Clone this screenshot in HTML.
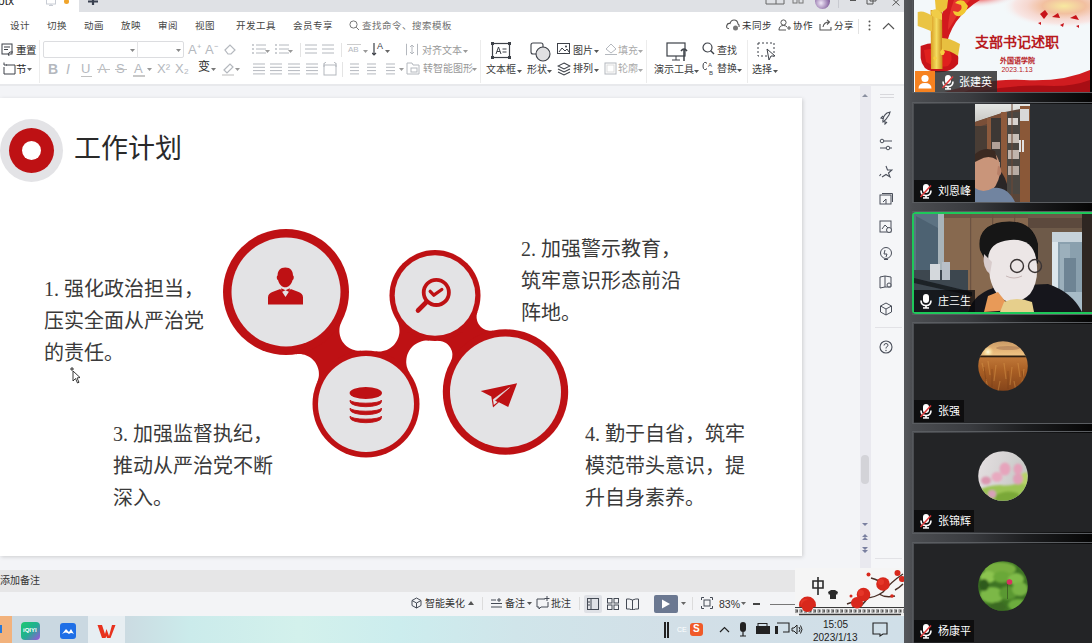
<!DOCTYPE html><html lang="zh-CN"><head><meta charset="utf-8"><style>
*{box-sizing:border-box}
body{margin:0;width:1092px;height:643px;overflow:hidden;position:relative;background:#f3f4f7;font-family:"Liberation Sans",sans-serif;color:#333}
.a{position:absolute}
.t{position:absolute;white-space:nowrap;font-size:10px;line-height:12px}
.song{font-family:"Liberation Serif",serif}
</style></head><body>
<div class="a" style="left:0;top:0;width:904px;height:12px;background:#dfe1e5"></div>
<div class="a" style="left:0;top:0;width:79px;height:12px;background:#fff"></div>
<div class="t" style="left:-2px;top:-6px;font-size:12px;line-height:14px;color:#2a2a2a;">otx</div>
<svg class="a" style="left:46px;top:0px" width="10" height="6" viewBox="0 0 10 6"><rect x="0.5" y="-2" width="9" height="6" fill="none" stroke="#c8ccd4"/><path d="M5 4 V6 M3 5.5 H7" stroke="#c8ccd4"/></svg>
<div class="a" style="left:64px;top:-1px;width:5px;height:5px;border-radius:50%;background:#f0a42a"></div>
<svg class="a" style="left:87px;top:0px" width="12" height="5" viewBox="0 0 12 5"><path d="M1 1.5 H11 M6 -4 V5" stroke="#3a4150" stroke-width="2.2"/></svg>
<svg class="a" style="left:765px;top:0px" width="20" height="5" viewBox="0 0 20 5"><path d="M1 -2 V4 H19 V-2 M11 -2 V4" stroke="#666" fill="none"/></svg>
<svg class="a" style="left:792px;top:0px" width="12" height="5" viewBox="0 0 12 5"><rect x="1" y="-2" width="4" height="5" fill="none" stroke="#777"/><rect x="7" y="-2" width="4" height="5" fill="none" stroke="#777"/></svg>
<div class="a" style="left:815px;top:-6px;width:15px;height:15px;border-radius:50%;background:radial-gradient(circle at 40% 60%,#f0e8f8,#9070a8 60%,#604878)"></div>
<div class="a" style="left:838px;top:0;width:1px;height:8px;background:#c8cad0"></div>
<div class="a" style="left:850px;top:0;width:6px;height:1px;background:#555"></div>
<svg class="a" style="left:866px;top:0px" width="11" height="5" viewBox="0 0 11 5"><path d="M1 -2 V4 H7 V-2 M4 -2 V1 H10 V-2" stroke="#555" fill="none"/></svg>
<svg class="a" style="left:892px;top:0px" width="8" height="6" viewBox="0 0 8 6"><path d="M0.5 -1 L7.5 5.5 M7.5 -1 L0.5 5.5" stroke="#555" fill="none"/></svg>
<div class="a" style="left:0;top:12px;width:904px;height:73px;background:#fff"></div>
<div class="t" style="left:10px;top:20px;font-size:9.5px;line-height:11.5px;color:#444;">设计</div>
<div class="t" style="left:47px;top:20px;font-size:9.5px;line-height:11.5px;color:#444;">切换</div>
<div class="t" style="left:84px;top:20px;font-size:9.5px;line-height:11.5px;color:#444;">动画</div>
<div class="t" style="left:121px;top:20px;font-size:9.5px;line-height:11.5px;color:#444;">放映</div>
<div class="t" style="left:158px;top:20px;font-size:9.5px;line-height:11.5px;color:#444;">审阅</div>
<div class="t" style="left:195px;top:20px;font-size:9.5px;line-height:11.5px;color:#444;">视图</div>
<div class="t" style="left:236px;top:20px;font-size:9.5px;line-height:11.5px;color:#444;">开发工具</div>
<div class="t" style="left:293px;top:20px;font-size:9.5px;line-height:11.5px;color:#444;">会员专享</div>
<svg class="a" style="left:349px;top:20px" width="11" height="11" viewBox="0 0 11 11"><circle cx="4.5" cy="4.5" r="3.6" fill="none" stroke="#777" stroke-width="1"/><path d="M7.2 7.2 L10 10" stroke="#777"/></svg>
<div class="t" style="left:362px;top:20px;font-size:9.5px;line-height:11.5px;color:#707070;">查找命令、搜索模板</div>
<svg class="a" style="left:726px;top:19px" width="14" height="12" viewBox="0 0 14 12"><path d="M3 9.5 Q0 9.5 0.8 6.5 Q1.5 4 4 4.5 Q5 1 8 1 Q11.5 1 12 5 Q13.5 5.5 13 8" fill="none" stroke="#555" stroke-width="1.1"/><circle cx="9.5" cy="9" r="2.5" fill="#777"/></svg>
<div class="t" style="left:742px;top:20px;font-size:9.5px;line-height:11.5px;color:#333;">未同步</div>
<svg class="a" style="left:778px;top:19px" width="13" height="12" viewBox="0 0 13 12"><circle cx="5.5" cy="3.5" r="2.6" fill="none" stroke="#555"/><path d="M1 11 Q1 6.5 5.5 6.5 Q8 6.5 9 8 M0.8 11 H8" fill="none" stroke="#555"/><path d="M9 9 H13 M11 7 V11" stroke="#555"/></svg>
<div class="t" style="left:793px;top:20px;font-size:9.5px;line-height:11.5px;color:#333;">协作</div>
<svg class="a" style="left:819px;top:19px" width="13" height="12" viewBox="0 0 13 12"><path d="M1 5 V11 H12 V8 M4 8 Q5 3 10 3 M8 0.8 L10.5 3 L8 5.5" fill="none" stroke="#555" stroke-width="1.1"/></svg>
<div class="t" style="left:834px;top:20px;font-size:9.5px;line-height:11.5px;color:#333;">分享</div>
<div class="a" style="left:858px;top:19px;width:1px;height:15px;background:#e2e2e2"></div>
<svg class="a" style="left:868px;top:20px" width="3" height="11" viewBox="0 0 3 11"><circle cx="1.5" cy="1.5" r="1" fill="#555"/><circle cx="1.5" cy="5.5" r="1" fill="#555"/><circle cx="1.5" cy="9.5" r="1" fill="#555"/></svg>
<svg class="a" style="left:882px;top:22px" width="13" height="8" viewBox="0 0 13 8"><path d="M1 7 L6.5 1.5 L12 7" fill="none" stroke="#555" stroke-width="1.2"/></svg>
<svg class="a" style="left:1px;top:43px" width="14" height="14" viewBox="0 0 14 14"><rect x="1" y="1" width="10" height="10" fill="none" stroke="#3d4148"/><path d="M3 4 H9 M3 6.5 H7" stroke="#3d4148"/><path d="M8 13 Q6 10 9 9 L12 9" fill="none" stroke="#3d4148"/></svg>
<div class="t" style="left:16px;top:44px;font-size:10.5px;line-height:12.5px;color:#2a2a2a;">重置</div>
<svg class="a" style="left:3px;top:62px" width="13" height="13" viewBox="0 0 13 13"><path d="M1 3 H4 M1 0.5 V3 M3 3 H12 V12 H1 V5" fill="none" stroke="#3d4148"/></svg>
<div class="t" style="left:16px;top:63px;font-size:10.5px;line-height:12.5px;color:#2a2a2a;">节</div>
<svg class="a" style="left:27px;top:68px" width="5" height="3" viewBox="0 0 5 3"><path d="M0 0 L5 0 L2.5 3Z" fill="#666"/></svg>
<div class="a" style="left:39px;top:40px;width:1px;height:43px;background:#ececec"></div>
<div class="a" style="left:43px;top:41px;width:141px;height:17px;border:1px solid #dcdde0;border-radius:2px"></div>
<div class="a" style="left:137px;top:41px;width:1px;height:17px;background:#e4e4e6"></div>
<svg class="a" style="left:130px;top:49px" width="5" height="3" viewBox="0 0 5 3"><path d="M0 0 L5 0 L2.5 3Z" fill="#888"/></svg>
<svg class="a" style="left:176px;top:49px" width="5" height="3" viewBox="0 0 5 3"><path d="M0 0 L5 0 L2.5 3Z" fill="#888"/></svg>
<div class="t" style="left:188px;top:42px;font-size:13px;line-height:15px;color:#b4b8be;">A⁺</div>
<div class="t" style="left:205px;top:42px;font-size:13px;line-height:15px;color:#b4b8be;">A⁻</div>
<svg class="a" style="left:224px;top:43px" width="13" height="12" viewBox="0 0 13 12"><path d="M1 7 L6 2 L11 7 L7 11 H4Z" fill="none" stroke="#b4b8be" stroke-width="1.2"/></svg>
<div class="t" style="left:48px;top:61px;font-size:14px;line-height:16px;color:#b4b8be;font-weight:bold">B</div>
<div class="t" style="left:66px;top:61px;font-size:14px;line-height:16px;color:#b4b8be;font-style:italic">I</div>
<div class="t" style="left:81px;top:61px;font-size:13px;line-height:15px;color:#b4b8be;">U</div>
<div class="a" style="left:81px;top:76px;width:11px;height:1px;background:#c0c0c0"></div>
<div class="t" style="left:98px;top:61px;font-size:13px;line-height:15px;color:#b4b8be;">A</div>
<div class="a" style="left:97px;top:69px;width:13px;height:1px;background:#c0c0c0"></div>
<div class="t" style="left:116px;top:61px;font-size:13px;line-height:15px;color:#b4b8be;">S</div>
<div class="a" style="left:115px;top:69px;width:12px;height:1px;background:#c0c0c0"></div>
<div class="t" style="left:134px;top:61px;font-size:13px;line-height:15px;color:#b4b8be;">A</div>
<div class="a" style="left:133px;top:75px;width:12px;height:2px;background:#c8c8c8"></div>
<svg class="a" style="left:147px;top:68px" width="5" height="3" viewBox="0 0 5 3"><path d="M0 0 L5 0 L2.5 3Z" fill="#999"/></svg>
<div class="t" style="left:157px;top:61px;font-size:13px;line-height:15px;color:#b4b8be;">X²</div>
<div class="t" style="left:175px;top:61px;font-size:13px;line-height:15px;color:#b4b8be;">X₂</div>
<div class="t" style="left:198px;top:60px;font-size:12px;line-height:14px;color:#2a2a2a;">变</div>
<svg class="a" style="left:211px;top:68px" width="5" height="3" viewBox="0 0 5 3"><path d="M0 0 L5 0 L2.5 3Z" fill="#777"/></svg>
<svg class="a" style="left:221px;top:61px" width="16" height="15" viewBox="0 0 16 15"><path d="M3 9 L9 3 L12 6 L6 12Z" fill="none" stroke="#b4b8be" stroke-width="1.2"/><rect x="1" y="13" width="12" height="2" fill="#ddd"/></svg>
<svg class="a" style="left:235px;top:68px" width="5" height="3" viewBox="0 0 5 3"><path d="M0 0 L5 0 L2.5 3Z" fill="#999"/></svg>
<svg class="a" style="left:252px;top:44px" width="16" height="14" viewBox="0 0 16 14"><circle cx="1" cy="1" r="0.9" fill="#b4b8be"/><path d="M4 1 H14" stroke="#b4b8be" stroke-width="1"/><circle cx="1" cy="5" r="0.9" fill="#b4b8be"/><path d="M4 5 H14" stroke="#b4b8be" stroke-width="1"/><circle cx="1" cy="9" r="0.9" fill="#b4b8be"/><path d="M4 9 H14" stroke="#b4b8be" stroke-width="1"/></svg>
<svg class="a" style="left:265px;top:50px" width="5" height="3" viewBox="0 0 5 3"><path d="M0 0 L5 0 L2.5 3Z" fill="#999"/></svg>
<svg class="a" style="left:275px;top:44px" width="16" height="14" viewBox="0 0 16 14"><circle cx="1" cy="1" r="0.9" fill="#b4b8be"/><path d="M4 1 H14" stroke="#b4b8be" stroke-width="1"/><circle cx="1" cy="5" r="0.9" fill="#b4b8be"/><path d="M4 5 H14" stroke="#b4b8be" stroke-width="1"/><circle cx="1" cy="9" r="0.9" fill="#b4b8be"/><path d="M4 9 H14" stroke="#b4b8be" stroke-width="1"/></svg>
<svg class="a" style="left:288px;top:50px" width="5" height="3" viewBox="0 0 5 3"><path d="M0 0 L5 0 L2.5 3Z" fill="#999"/></svg>
<div class="a" style="left:300px;top:43px;width:1px;height:14px;background:#e4e4e4"></div>
<svg class="a" style="left:305px;top:44px" width="18" height="14" viewBox="0 0 18 14"><path d="M0 1 H12" stroke="#b4b8be" stroke-width="1"/><path d="M0 5 H12" stroke="#b4b8be" stroke-width="1"/><path d="M0 9 H12" stroke="#b4b8be" stroke-width="1"/></svg>
<svg class="a" style="left:322px;top:44px" width="18" height="14" viewBox="0 0 18 14"><path d="M0 1 H12" stroke="#b4b8be" stroke-width="1"/><path d="M0 5 H12" stroke="#b4b8be" stroke-width="1"/><path d="M0 9 H12" stroke="#b4b8be" stroke-width="1"/></svg>
<div class="a" style="left:341px;top:43px;width:1px;height:14px;background:#e4e4e4"></div>
<div class="t" style="left:348px;top:45px;font-size:8px;line-height:10px;color:#b4b8be;">AB</div>
<div class="a" style="left:347px;top:44px;width:14px;height:1px;background:#ccc"></div>
<svg class="a" style="left:363px;top:50px" width="5" height="3" viewBox="0 0 5 3"><path d="M0 0 L5 0 L2.5 3Z" fill="#999"/></svg>
<svg class="a" style="left:372px;top:42px" width="12" height="14" viewBox="0 0 12 14"><path d="M2 1 V13 M0 11 L2 13 L4 11" stroke="#3d4148" fill="none" stroke-width="1.2"/></svg>
<div class="t" style="left:377px;top:41px;font-size:9px;line-height:11px;color:#3d4148;">A</div>
<svg class="a" style="left:385px;top:50px" width="5" height="3" viewBox="0 0 5 3"><path d="M0 0 L5 0 L2.5 3Z" fill="#666"/></svg>
<svg class="a" style="left:406px;top:43px" width="12" height="13" viewBox="0 0 12 13"><path d="M1 1 H0.5 V12 H1 M11 1 H11.5 V12 H11 M6 2 V11 M4 4 L6 2 L8 4 M4 9 L6 11 L8 9" stroke="#b4b8be" fill="none"/></svg>
<div class="t" style="left:422px;top:45px;font-size:10px;line-height:12px;color:#999;">对齐文本</div>
<svg class="a" style="left:463px;top:50px" width="5" height="3" viewBox="0 0 5 3"><path d="M0 0 L5 0 L2.5 3Z" fill="#999"/></svg>
<svg class="a" style="left:253px;top:63px" width="18" height="15.2" viewBox="0 0 18 15.2"><path d="M0 1.0 H12" stroke="#b4b8be" stroke-width="1"/><path d="M0 4.3 H12" stroke="#b4b8be" stroke-width="1"/><path d="M0 7.6 H12" stroke="#b4b8be" stroke-width="1"/><path d="M0 10.899999999999999 H12" stroke="#b4b8be" stroke-width="1"/></svg>
<svg class="a" style="left:270px;top:63px" width="18" height="15.2" viewBox="0 0 18 15.2"><path d="M0 1.0 H12" stroke="#b4b8be" stroke-width="1"/><path d="M0 4.3 H12" stroke="#b4b8be" stroke-width="1"/><path d="M0 7.6 H12" stroke="#b4b8be" stroke-width="1"/><path d="M0 10.899999999999999 H12" stroke="#b4b8be" stroke-width="1"/></svg>
<svg class="a" style="left:288px;top:63px" width="18" height="15.2" viewBox="0 0 18 15.2"><path d="M0 1.0 H12" stroke="#b4b8be" stroke-width="1"/><path d="M0 4.3 H12" stroke="#b4b8be" stroke-width="1"/><path d="M0 7.6 H12" stroke="#b4b8be" stroke-width="1"/><path d="M0 10.899999999999999 H12" stroke="#b4b8be" stroke-width="1"/></svg>
<svg class="a" style="left:306px;top:63px" width="18" height="15.2" viewBox="0 0 18 15.2"><path d="M0 1.0 H12" stroke="#b4b8be" stroke-width="1"/><path d="M0 4.3 H12" stroke="#b4b8be" stroke-width="1"/><path d="M0 7.6 H12" stroke="#b4b8be" stroke-width="1"/><path d="M0 10.899999999999999 H12" stroke="#b4b8be" stroke-width="1"/></svg>
<svg class="a" style="left:323px;top:62px" width="14" height="14" viewBox="0 0 14 14"><rect x="1" y="3" width="12" height="10" fill="none" stroke="#b4b8be"/><path d="M1 1 V5 M13 1 V5 M3 0 L1 1.5 M11 0 L13 1.5" stroke="#b4b8be"/></svg>
<div class="a" style="left:342px;top:62px;width:1px;height:15px;background:#e4e4e4"></div>
<svg class="a" style="left:350px;top:63px" width="15" height="15.2" viewBox="0 0 15 15.2"><path d="M0 1.0 H9" stroke="#b4b8be" stroke-width="1"/><path d="M0 4.3 H9" stroke="#b4b8be" stroke-width="1"/><path d="M0 7.6 H9" stroke="#b4b8be" stroke-width="1"/><path d="M0 10.899999999999999 H9" stroke="#b4b8be" stroke-width="1"/></svg>
<svg class="a" style="left:367px;top:63px" width="15" height="15.2" viewBox="0 0 15 15.2"><path d="M0 1.0 H9" stroke="#b4b8be" stroke-width="1"/><path d="M0 4.3 H9" stroke="#b4b8be" stroke-width="1"/><path d="M0 7.6 H9" stroke="#b4b8be" stroke-width="1"/><path d="M0 10.899999999999999 H9" stroke="#b4b8be" stroke-width="1"/></svg>
<svg class="a" style="left:386px;top:63px" width="15" height="15.2" viewBox="0 0 15 15.2"><path d="M0 1.0 H9" stroke="#b4b8be" stroke-width="1"/><path d="M0 4.3 H9" stroke="#b4b8be" stroke-width="1"/><path d="M0 7.6 H9" stroke="#b4b8be" stroke-width="1"/><path d="M0 10.899999999999999 H9" stroke="#b4b8be" stroke-width="1"/></svg>
<svg class="a" style="left:399px;top:68px" width="5" height="3" viewBox="0 0 5 3"><path d="M0 0 L5 0 L2.5 3Z" fill="#999"/></svg>
<svg class="a" style="left:406px;top:62px" width="14" height="13" viewBox="0 0 14 13"><path d="M1 1 H6 L7 3 H13 V12 H1Z" fill="none" stroke="#b4b8be"/><rect x="5" y="6" width="6" height="4" fill="none" stroke="#b4b8be"/></svg>
<div class="t" style="left:423px;top:63px;font-size:10px;line-height:12px;color:#999;">转智能图形</div>
<svg class="a" style="left:472px;top:68px" width="5" height="3" viewBox="0 0 5 3"><path d="M0 0 L5 0 L2.5 3Z" fill="#999"/></svg>
<div class="a" style="left:480px;top:40px;width:1px;height:43px;background:#ececec"></div>
<svg class="a" style="left:491px;top:42px" width="20" height="18" viewBox="0 0 20 18"><rect x="1.5" y="1.5" width="17" height="14" fill="none" stroke="#3d4148" stroke-width="1.2"/><path d="M5 12 L7.5 5 L10 12 M6 9.5 H9 M11.5 7 H15.5 M11.5 10 H15.5" stroke="#3d4148" fill="none"/><rect x="0" y="0" width="3" height="3" fill="#3d4148"/><rect x="17" y="0" width="3" height="3" fill="#3d4148"/><rect x="0" y="14" width="3" height="3" fill="#3d4148"/><rect x="17" y="14" width="3" height="3" fill="#3d4148"/></svg>
<div class="t" style="left:486px;top:64px;font-size:10px;line-height:12px;color:#3a3a3a;">文本框</div>
<svg class="a" style="left:517px;top:70px" width="5" height="3" viewBox="0 0 5 3"><path d="M0 0 L5 0 L2.5 3Z" fill="#555"/></svg>
<svg class="a" style="left:530px;top:42px" width="22" height="20" viewBox="0 0 22 20"><rect x="1" y="1" width="12" height="11" rx="2" fill="none" stroke="#3d4148" stroke-width="1.1"/><circle cx="13" cy="12" r="7" fill="#e0e0e2" stroke="#3d4148" stroke-width="1.1"/></svg>
<div class="t" style="left:527px;top:64px;font-size:10px;line-height:12px;color:#3a3a3a;">形状</div>
<svg class="a" style="left:547px;top:70px" width="5" height="3" viewBox="0 0 5 3"><path d="M0 0 L5 0 L2.5 3Z" fill="#555"/></svg>
<svg class="a" style="left:557px;top:43px" width="14" height="12" viewBox="0 0 14 12"><rect x="0.5" y="0.5" width="12" height="10" fill="none" stroke="#3d4148"/><path d="M2 9 L5 5 L8 8 L10 6 L12 9" stroke="#3d4148" fill="none"/><circle cx="9" cy="3.5" r="1" fill="#3d4148"/></svg>
<div class="t" style="left:573px;top:45px;font-size:10px;line-height:12px;color:#3a3a3a;">图片</div>
<svg class="a" style="left:594px;top:50px" width="5" height="3" viewBox="0 0 5 3"><path d="M0 0 L5 0 L2.5 3Z" fill="#555"/></svg>
<svg class="a" style="left:604px;top:43px" width="14" height="12" viewBox="0 0 14 12"><path d="M2 6 L7 1 L12 6 L7 10Z M1 11.5 H13" stroke="#b4b8be" fill="none"/></svg>
<div class="t" style="left:618px;top:45px;font-size:10px;line-height:12px;color:#aaa;">填充</div>
<svg class="a" style="left:638px;top:50px" width="5" height="3" viewBox="0 0 5 3"><path d="M0 0 L5 0 L2.5 3Z" fill="#aaa"/></svg>
<svg class="a" style="left:557px;top:62px" width="14" height="14" viewBox="0 0 14 14"><path d="M7 1 L13 4 L7 7 L1 4Z M1 7 L7 10 L13 7 M1 10 L7 13 L13 10" stroke="#3d4148" fill="none" stroke-width="1.1"/></svg>
<div class="t" style="left:573px;top:63px;font-size:10px;line-height:12px;color:#3a3a3a;">排列</div>
<svg class="a" style="left:594px;top:69px" width="5" height="3" viewBox="0 0 5 3"><path d="M0 0 L5 0 L2.5 3Z" fill="#555"/></svg>
<svg class="a" style="left:604px;top:62px" width="13" height="13" viewBox="0 0 13 13"><rect x="1" y="1" width="11" height="11" fill="none" stroke="#b4b8be"/><rect x="3" y="3" width="7" height="7" fill="none" stroke="#ddd"/></svg>
<div class="t" style="left:618px;top:63px;font-size:10px;line-height:12px;color:#aaa;">轮廓</div>
<svg class="a" style="left:638px;top:69px" width="5" height="3" viewBox="0 0 5 3"><path d="M0 0 L5 0 L2.5 3Z" fill="#aaa"/></svg>
<div class="a" style="left:646px;top:40px;width:1px;height:43px;background:#ececec"></div>
<svg class="a" style="left:666px;top:42px" width="24" height="20" viewBox="0 0 24 20"><rect x="1" y="1" width="18" height="13" fill="none" stroke="#3d4148" stroke-width="1.2"/><path d="M10 14 V18 M6 18 H14" stroke="#3d4148" fill="none"/><path d="M18 8 L18 19 M15 9 Q18 5 21 9" stroke="#3d4148" fill="none" stroke-width="1.5"/></svg>
<div class="t" style="left:654px;top:64px;font-size:10px;line-height:12px;color:#3a3a3a;">演示工具</div>
<svg class="a" style="left:694px;top:70px" width="5" height="3" viewBox="0 0 5 3"><path d="M0 0 L5 0 L2.5 3Z" fill="#555"/></svg>
<svg class="a" style="left:702px;top:42px" width="13" height="13" viewBox="0 0 13 13"><circle cx="5.5" cy="5.5" r="4.5" fill="none" stroke="#3d4148" stroke-width="1.2"/><path d="M8.5 8.5 L12 12" stroke="#3d4148" stroke-width="1.4"/></svg>
<div class="t" style="left:717px;top:45px;font-size:10px;line-height:12px;color:#3a3a3a;">查找</div>
<svg class="a" style="left:702px;top:61px" width="14" height="15" viewBox="0 0 14 15"><path d="M5 2.5 Q4 1 2.5 1.5 Q1 2 1 5 Q1 8 2.5 8.5 Q4 9 5 7.5" stroke="#3d4148" fill="none"/><text x="6" y="6" font-size="6" font-family="Liberation Sans" fill="#3d4148">A</text><text x="7" y="14" font-size="6" font-family="Liberation Sans" fill="#3d4148">B</text></svg>
<div class="t" style="left:717px;top:63px;font-size:10px;line-height:12px;color:#3a3a3a;">替换</div>
<svg class="a" style="left:737px;top:69px" width="5" height="3" viewBox="0 0 5 3"><path d="M0 0 L5 0 L2.5 3Z" fill="#555"/></svg>
<div class="a" style="left:747px;top:40px;width:1px;height:43px;background:#ececec"></div>
<svg class="a" style="left:757px;top:42px" width="20" height="20" viewBox="0 0 20 20"><rect x="1" y="1" width="16" height="13" fill="none" stroke="#3d4148" stroke-dasharray="2 2"/><path d="M10 7 L18 14 L14 14 L12 18Z" fill="#fff" stroke="#3d4148"/></svg>
<div class="t" style="left:752px;top:64px;font-size:10px;line-height:12px;color:#3a3a3a;">选择</div>
<svg class="a" style="left:773px;top:70px" width="5" height="3" viewBox="0 0 5 3"><path d="M0 0 L5 0 L2.5 3Z" fill="#555"/></svg>
<div class="a" style="left:0;top:84px;width:904px;height:2px;background:#e8e9ec"></div>
<div class="a" style="left:0;top:86px;width:860px;height:484px;background:#f3f4f7"></div>
<div class="a" style="left:0;top:98px;width:802px;height:458px;background:#fff;box-shadow:1px 1px 4px rgba(0,0,0,.16)"></div>
<div class="a" style="left:0;top:0;width:802px;height:560px">
<svg style="position:absolute;left:0;top:0" width="802" height="560"><path d="M295.8 354.2 L297.6 354.0 L299.4 354.0 L301.1 354.1 L302.9 354.4 L304.6 354.8 L306.3 355.4 L308.0 356.2 L309.5 357.0 L311.0 358.1 L312.4 359.2 L313.6 360.5 L314.8 361.8 L315.8 363.3 L316.7 364.9 L317.4 366.5 L318.0 368.2 L318.5 369.9 L318.8 371.7 L318.9 373.5 L318.9 375.2 L318.7 377.0 L318.3 378.8 L317.8 380.5 L317.2 382.2 L361.2 350.7 L359.4 350.8 L357.6 350.7 L355.8 350.5 L354.1 350.1 L352.4 349.5 L350.7 348.8 L349.2 348.0 L347.7 347.0 L346.3 345.9 L345.0 344.7 L343.8 343.3 L342.7 341.9 L341.8 340.4 L341.0 338.7 L340.4 337.1 L339.9 335.3 L339.6 333.6 L339.4 331.8 L339.4 330.0 L339.5 328.2 L339.8 326.5 L340.3 324.7 L340.9 323.1 L341.7 321.5Z" fill="#be1114"/><path d="M410.0 373.5 L408.9 371.8 L408.0 370.0 L407.3 368.1 L406.7 366.2 L406.4 364.2 L406.2 362.2 L406.3 360.2 L406.5 358.2 L406.9 356.3 L407.5 354.3 L408.3 352.5 L409.2 350.7 L410.3 349.1 L411.6 347.5 L413.0 346.1 L414.6 344.8 L416.2 343.7 L418.0 342.7 L419.8 341.9 L421.7 341.3 L423.7 340.8 L425.7 340.6 L427.7 340.5 L429.7 340.7 L396.3 319.5 L397.3 321.2 L398.1 323.1 L398.7 325.0 L399.2 326.9 L399.4 328.9 L399.5 330.9 L399.4 332.9 L399.0 334.9 L398.5 336.9 L397.8 338.7 L397.0 340.6 L395.9 342.3 L394.7 343.9 L393.4 345.4 L391.9 346.7 L390.3 347.9 L388.6 349.0 L386.8 349.9 L384.9 350.6 L382.9 351.1 L381.0 351.4 L379.0 351.5 L377.0 351.5 L375.0 351.3Z" fill="#be1114"/><path d="M437.6 340.9 L438.8 340.9 L440.1 341.0 L441.3 341.2 L442.5 341.5 L443.7 341.9 L444.8 342.5 L445.9 343.1 L446.9 343.8 L447.8 344.6 L448.7 345.5 L449.5 346.4 L450.2 347.5 L450.8 348.5 L451.3 349.7 L451.8 350.8 L452.1 352.0 L452.3 353.3 L452.4 354.5 L452.3 355.8 L452.2 357.0 L452.0 358.2 L451.6 359.4 L451.2 360.6 L450.6 361.7 L493.3 330.5 L492.1 330.7 L490.8 330.8 L489.6 330.7 L488.3 330.6 L487.1 330.3 L485.9 330.0 L484.8 329.5 L483.7 329.0 L482.6 328.3 L481.6 327.5 L480.7 326.7 L479.9 325.8 L479.1 324.8 L478.4 323.8 L477.9 322.7 L477.4 321.5 L477.0 320.3 L476.8 319.1 L476.6 317.9 L476.6 316.6 L476.6 315.4 L476.8 314.2 L477.1 312.9 L477.5 311.8Z" fill="#be1114"/><circle cx="286" cy="292" r="63" fill="#be1114"/><circle cx="435" cy="295.5" r="45.5" fill="#be1114"/><circle cx="366" cy="404" r="53.5" fill="#be1114"/><circle cx="505.5" cy="392" r="62.7" fill="#be1114"/><circle cx="286" cy="292" r="54.5" fill="#e3e3e5"/><circle cx="435" cy="295.5" r="40.3" fill="#e3e3e5"/><circle cx="366" cy="404" r="48" fill="#e3e3e5"/><circle cx="505.5" cy="392" r="55.5" fill="#e3e3e5"/>
<g fill="#be1114">
 <path d="M285.3 267.6 C290.5 267.6 293 271 293 275.5 C294.2 276 294 279.5 292.6 280 C291.6 284.5 288.5 287.3 285.3 287.3 C282.1 287.3 279 284.5 278 280 C276.6 279.5 276.4 276 277.6 275.5 C277.6 271 280.1 267.6 285.3 267.6Z"/>
 <path d="M268 304.5 V297.5 Q268 293.5 273 291.8 L280.3 289 L285.5 297 L290.7 289 L298 291.8 Q303 293.5 303 297.5 V304.5Z"/>
 <path d="M281.2 288.3 L285.5 290.3 L289.8 288.3 L289.8 292.2 L285.5 290.3 L281.2 292.2Z"/>
</g>
<g fill="none" stroke="#be1114" stroke-linecap="round">
 <circle cx="436.3" cy="292.4" r="12.6" stroke-width="3.8"/>
 <path d="M426.5 302 L418 310.5" stroke-width="4.6"/>
 <path d="M430.2 291.3 L433.8 295.2 L441.8 289.5" stroke-width="3.3" stroke-linejoin="round"/>
</g>
<g fill="#be1114">
 <ellipse cx="365.8" cy="393" rx="16.2" ry="6"/>
 <path d="M350.2 400 A15.6 3.2 0 0 0 381.4 400 L381.4 401.8 A15.6 4.9 0 0 1 350.2 401.8Z" stroke="#be1114" stroke-width="0.9" stroke-linejoin="round"/>
 <path d="M350.2 408 A15.6 3.2 0 0 0 381.4 408 L381.4 409.8 A15.6 4.9 0 0 1 350.2 409.8Z" stroke="#be1114" stroke-width="0.9" stroke-linejoin="round"/>
 <path d="M350.2 416 A15.6 3.2 0 0 0 381.4 416 L381.4 417.8 A15.6 4.9 0 0 1 350.2 417.8Z" stroke="#be1114" stroke-width="0.9" stroke-linejoin="round"/>
</g>
<g>
 <path d="M480.7 391.1 L517.1 383.2 L508.2 407 L498.9 402.3 L493 407.6 L491.3 396.5Z" fill="#be1114"/>
 <path d="M509.5 387.6 L493.3 399.4 L494.3 401Z" fill="#e3e3e5" stroke="#e3e3e5" stroke-width="0.6"/>
 <path d="M493 399.5 L493.8 405 L497.6 402Z" fill="#e3e3e5"/>
</g>
</svg>
</div>
<div class="a" style="left:0;top:119px;width:63px;height:63px;border-radius:50%;background:#e3e3e6"></div>
<div class="a" style="left:9px;top:128px;width:45px;height:45px;border-radius:50%;background:#be1114"></div>
<div class="a" style="left:22px;top:141px;width:19px;height:19px;border-radius:50%;background:#fff"></div>
<div class="t song" style="left:74px;top:131px;font-size:27px;line-height:36px;color:#2a2a2a">工作计划</div>
<div class="t song" style="left:44px;top:273px;font-size:20px;line-height:32px;color:#3a3a3a;white-space:pre">1. 强化政治担当，
压实全面从严治党
的责任。</div>
<div class="t song" style="left:521px;top:233px;font-size:20px;line-height:32px;color:#3a3a3a;white-space:pre">2. 加强警示教育，
筑牢意识形态前沿
阵地。</div>
<div class="t song" style="left:113px;top:418px;font-size:20px;line-height:32px;color:#3a3a3a;white-space:pre">3. 加强监督执纪，
推动从严治党不断
深入。</div>
<div class="t song" style="left:585px;top:418px;font-size:20px;line-height:32px;color:#3a3a3a;white-space:pre">4. 勤于自省，筑牢
模范带头意识，提
升自身素养。</div>
<svg class="a" style="left:68px;top:366px" width="12" height="18" viewBox="0 0 12 18"><path d="M4 1 V5 M2 3 H6 M5 5 L5 15 L7.5 12.5 L9.5 17 L11 16.3 L9 12 L12 11.5Z" fill="#fff" stroke="#222" stroke-width="0.9"/></svg>
<div class="a" style="left:860px;top:86px;width:11px;height:484px;background:#e9e9ef"></div>
<svg class="a" style="left:861px;top:93px" width="8" height="5" viewBox="0 0 8 5"><path d="M1 4 L4 1 L7 4Z" fill="#8a8fa0"/></svg>
<div class="a" style="left:861px;top:455px;width:8px;height:29px;border-radius:4px;background:#d3d3d8"></div>
<svg class="a" style="left:861px;top:522px" width="8" height="5" viewBox="0 0 8 5"><path d="M1 1 L4 4 L7 1Z" fill="#7a80a0"/></svg>
<svg class="a" style="left:861px;top:533px" width="8" height="8" viewBox="0 0 8 8"><path d="M1 4 L4 1 L7 4Z M1 7 L4 4 L7 7Z" fill="#7a80a0"/></svg>
<svg class="a" style="left:861px;top:546px" width="8" height="8" viewBox="0 0 8 8"><path d="M1 1 L4 4 L7 1Z M1 4 L4 7 L7 4Z" fill="#7a80a0"/></svg>
<div class="a" style="left:871px;top:86px;width:33px;height:484px;background:#f5f6f8"></div>
<div class="a" style="left:880px;top:94px;width:14px;height:1px;background:#d8d8dc"></div><div class="a" style="left:880px;top:97px;width:14px;height:1px;background:#d8d8dc"></div>
<svg class="a" style="left:879px;top:111px" width="14" height="14" viewBox="0 0 14 14"><path d="M4 11 Q3 6 8 2 L11 1 L10 4 Q7 9 4 11Z M5 8 L2 7 L4 5 M6 10 L6 13 L8 11" fill="none" stroke="#4a4f5a" stroke-width="1.1"/></svg>
<svg class="a" style="left:879px;top:138px" width="14" height="14" viewBox="0 0 14 14"><circle cx="3" cy="3" r="1.8" fill="none" stroke="#4a4f5a"/><path d="M5 3 H13 M1 10 H13" stroke="#4a4f5a"/><circle cx="9" cy="10" r="1.8" fill="#f5f6f8" stroke="#4a4f5a"/></svg>
<svg class="a" style="left:879px;top:165px" width="14" height="14" viewBox="0 0 14 14"><path d="M7 1 L8.5 5 L13 5 L9.5 8 L11 12 L7 9.5 L3 12 M2 9 L0.5 11" fill="none" stroke="#4a4f5a" stroke-width="1.1"/></svg>
<svg class="a" style="left:879px;top:193px" width="14" height="14" viewBox="0 0 14 14"><rect x="1" y="2" width="11" height="9" fill="none" stroke="#4a4f5a"/><path d="M3 0.5 H13.5 V9" fill="none" stroke="#4a4f5a"/><path d="M4 9 L7 6 L7 11" stroke="#4a4f5a" fill="none"/></svg>
<svg class="a" style="left:879px;top:220px" width="14" height="14" viewBox="0 0 14 14"><rect x="1" y="1" width="11" height="11" fill="none" stroke="#4a4f5a"/><path d="M3 9 L6 5 L9 8" stroke="#4a4f5a" fill="none"/><circle cx="10" cy="10" r="2.5" fill="#f5f6f8" stroke="#4a4f5a"/></svg>
<svg class="a" style="left:879px;top:247px" width="14" height="14" viewBox="0 0 14 14"><circle cx="7" cy="6" r="5.5" fill="none" stroke="#4a4f5a"/><path d="M6 3 L5 7 H8 L7 10" stroke="#4a4f5a" fill="none"/><path d="M5 12.5 H9" stroke="#4a4f5a"/></svg>
<svg class="a" style="left:879px;top:275px" width="14" height="14" viewBox="0 0 14 14"><path d="M1 2 L6 1 V12 L1 13Z M6 1 L12 2 V12 L6 12" fill="none" stroke="#4a4f5a"/><circle cx="10" cy="10" r="2" fill="#f5f6f8" stroke="#4a4f5a"/></svg>
<svg class="a" style="left:879px;top:302px" width="14" height="14" viewBox="0 0 14 14"><path d="M7 1 L12.5 4 V10 L7 13 L1.5 10 V4Z M1.5 4 L7 7 L12.5 4 M7 7 V13" fill="none" stroke="#4a4f5a"/></svg>
<svg class="a" style="left:879px;top:340px" width="14" height="14" viewBox="0 0 14 14"><circle cx="7" cy="7" r="6" fill="none" stroke="#4a4f5a" stroke-width="1.1"/><path d="M5 5.5 Q5 3.5 7 3.5 Q9 3.5 9 5.2 Q9 6.5 7 7.5 V8.5" fill="none" stroke="#4a4f5a"/><circle cx="7" cy="10.5" r="0.7" fill="#4a4f5a"/></svg>
<div class="a" style="left:875px;top:327px;width:27px;height:1px;background:#e2e2e6"></div>
<div class="a" style="left:875px;top:558px;width:27px;height:1px;background:#e2e2e6"></div>
<div class="a" style="left:0;top:570px;width:904px;height:22px;background:#e6e6e7"></div>
<div class="t" style="left:0px;top:575px;font-size:10px;line-height:12px;color:#333;">添加备注</div>
<div class="a" style="left:0;top:592px;width:904px;height:24px;background:#f3f4f6"></div>
<svg class="a" style="left:411px;top:597px" width="11" height="12" viewBox="0 0 11 12"><path d="M5.5 1 L10 3.5 V8.5 L5.5 11 L1 8.5 V3.5Z M1 3.5 L5.5 6 L10 3.5 M5.5 6 V11" fill="none" stroke="#444a55"/></svg>
<div class="t" style="left:425px;top:598px;font-size:10px;line-height:12px;color:#333;">智能美化</div>
<svg class="a" style="left:468px;top:601px" width="6" height="4" viewBox="0 0 6 4"><path d="M0 4 L3 0 L6 4Z" fill="#555"/></svg>
<div class="a" style="left:482px;top:597px;width:1px;height:13px;background:#dcdcdc"></div>
<svg class="a" style="left:490px;top:597px" width="13" height="12" viewBox="0 0 13 12"><path d="M1 3 H6 M1 6.5 H12 M1 10 H12 M9 1 V5 M7 3 H11" stroke="#444a55" fill="none"/></svg>
<div class="t" style="left:505px;top:598px;font-size:10px;line-height:12px;color:#333;">备注</div>
<svg class="a" style="left:527px;top:602px" width="5" height="3" viewBox="0 0 5 3"><path d="M0 0 L5 0 L2.5 3Z" fill="#555"/></svg>
<svg class="a" style="left:536px;top:596px" width="14" height="14" viewBox="0 0 14 14"><path d="M1 3 H9 M1 3 V11 H3 V13 L5 11 H12 V6" fill="none" stroke="#444a55"/><path d="M11 0 V5 M8.5 2.5 H13.5" stroke="#444a55"/></svg>
<div class="t" style="left:551px;top:598px;font-size:10px;line-height:12px;color:#333;">批注</div>
<div class="a" style="left:579px;top:597px;width:1px;height:13px;background:#dcdcdc"></div>
<div class="a" style="left:584px;top:595px;width:18px;height:18px;background:#dfe1e6;border-radius:2px"></div>
<svg class="a" style="left:587px;top:598px" width="12" height="12" viewBox="0 0 12 12"><rect x="0.5" y="0.5" width="11" height="11" fill="none" stroke="#444a55"/><path d="M4 0.5 V11.5 M1 4 H3 M1 7 H3" stroke="#444a55"/></svg>
<svg class="a" style="left:607px;top:598px" width="12" height="12" viewBox="0 0 12 12"><rect x="0.5" y="0.5" width="4.5" height="4.5" fill="none" stroke="#444a55"/><rect x="7" y="0.5" width="4.5" height="4.5" fill="none" stroke="#444a55"/><rect x="0.5" y="7" width="4.5" height="4.5" fill="none" stroke="#444a55"/><rect x="7" y="7" width="4.5" height="4.5" fill="none" stroke="#444a55"/></svg>
<svg class="a" style="left:626px;top:598px" width="13" height="12" viewBox="0 0 13 12"><path d="M6.5 2 Q3 0.5 0.5 1 V11 Q3 10.5 6.5 12 Q10 10.5 12.5 11 V1 Q10 0.5 6.5 2 V12" fill="none" stroke="#444a55"/></svg>
<div class="a" style="left:654px;top:595px;width:24px;height:18px;border-radius:2px;background:#6b7891"></div>
<svg class="a" style="left:661px;top:599px" width="10" height="10" viewBox="0 0 10 10"><path d="M1 0.5 L9 5 L1 9.5Z" fill="#fff"/></svg>
<svg class="a" style="left:681px;top:602px" width="5" height="3" viewBox="0 0 5 3"><path d="M0 0 L5 0 L2.5 3Z" fill="#666"/></svg>
<div class="a" style="left:692px;top:597px;width:1px;height:13px;background:#dcdcdc"></div>
<svg class="a" style="left:701px;top:597px" width="12" height="12" viewBox="0 0 12 12"><path d="M0.5 3 V0.5 H3 M9 0.5 H11.5 V3 M11.5 9 V11.5 H9 M3 11.5 H0.5 V9" fill="none" stroke="#444a55"/><rect x="3" y="3" width="6" height="6" fill="none" stroke="#444a55"/></svg>
<div class="t" style="left:719px;top:598px;font-size:10.5px;line-height:12.5px;color:#333;">83%</div>
<svg class="a" style="left:741px;top:602px" width="5" height="3" viewBox="0 0 5 3"><path d="M0 0 L5 0 L2.5 3Z" fill="#666"/></svg>
<div class="a" style="left:753px;top:603px;width:7px;height:2px;background:#444"></div>
<div class="a" style="left:770px;top:604px;width:26px;height:1px;background:#777"></div>
<svg class="a" style="left:795px;top:568px" width="109" height="48" viewBox="0 0 109 48">
<rect width="109" height="48" fill="#f5f5f5"/>
<path d="M18 13 H28 V20 H18Z M23 9 V27" fill="none" stroke="#2a2a2a" stroke-width="1.6"/>
<path d="M33 24 L36 22 L40 22 L43 24 L42 27 L41 26 V31 H35 V26 L34 27Z" fill="#2a2a2a"/>
<path d="M108 6 Q96 14 88 24 Q80 30 70 30 Q60 33 52 36 M84 26 Q90 30 100 28 M74 28 Q70 34 66 38 M92 18 Q84 12 76 10 M100 22 Q104 20 108 16" stroke="#4a3028" stroke-width="1.5" fill="none"/>
<g fill="#d8281c">
<circle cx="12.5" cy="37" r="8.5"/><circle cx="68.5" cy="26.5" r="6.8"/><circle cx="62" cy="35" r="6"/><circle cx="88" cy="16" r="6.8"/>
<circle cx="102.5" cy="5" r="3"/><circle cx="107" cy="11" r="3"/><circle cx="73.5" cy="6.5" r="2"/><circle cx="97" cy="28" r="1.8"/><circle cx="56" cy="28" r="1.5"/>
</g>
<g fill="#f04030" opacity=".6"><circle cx="10" cy="35" r="4"/><circle cx="86" cy="14" r="3"/><circle cx="66" cy="25" r="3"/></g>
<rect x="0" y="39" width="109" height="8" fill="#eee"/>
<path d="M0 39.5 H109" stroke="#3a3a3a" stroke-width="1.2"/>
<path d="M4 46.5 H106" stroke="#3a3a3a" stroke-width="1.4"/>
<path d="M0 43 H109" stroke="#555" stroke-width="3" stroke-dasharray="3 1.5"/>
<path d="M0 43 H109" stroke="#eee" stroke-width="1" stroke-dasharray="1.5 3"/>
<circle cx="12.5" cy="38" r="6" fill="#d8281c"/><circle cx="62" cy="37" r="3.5" fill="#d8281c"/>
</svg>
<div class="a" style="left:0;top:616px;width:904px;height:27px;background:linear-gradient(90deg,#ccdae2 0%,#cbdbe2 14%,#cbebeb 21%,#d3f1ec 33%,#ccedee 44%,#d0e5ea 57%,#d2dfe7 75%,#d0dfe8 100%)"></div>
<div class="a" style="left:0;top:616px;width:12px;height:27px;background:#f2b27c"></div>
<div class="a" style="left:0;top:625px;width:2px;height:8px;background:#2a7ad8"></div>
<div class="a" style="left:12px;top:616px;width:76px;height:27px;background:#cad8e1"></div>
<div class="a" style="left:21px;top:622px;width:19px;height:18px;border-radius:4px;background:linear-gradient(135deg,#20c870 0%,#20b090 50%,#a050e0 100%)"></div>
<div class="t" style="left:23px;top:626px;font-size:6px;line-height:8px;color:#fff;font-weight:bold">iQIYI</div>
<div class="a" style="left:60px;top:623px;width:16px;height:16px;border-radius:3px;background:#1f6fe6"></div>
<svg class="a" style="left:61px;top:627px" width="14" height="8" viewBox="0 0 14 8"><path d="M1 7 L5 2 L8 5 L10 2 L13 7 Q10 5 8 7 Q5 4 1 7Z" fill="#fff"/></svg>
<div class="a" style="left:88px;top:616px;width:37px;height:27px;background:#e7eef2"></div>
<svg class="a" style="left:97px;top:624px" width="19" height="15" viewBox="0 0 19 15"><path d="M0.5 1 L5 1 L8 10 L9.5 5 L12 12 L15 1 L18.5 1 L13.5 14 L10 14 L9.5 12 L8.5 14 L5 14Z" fill="#e8321e"/></svg>
<div class="a" style="left:664px;top:622px;width:1.5px;height:16px;background:#222"></div><div class="a" style="left:667px;top:622px;width:1.5px;height:16px;background:#222"></div>
<div class="t" style="left:677px;top:625px;font-size:7px;line-height:9px;color:#fff;">CE</div>
<div class="a" style="left:690px;top:623px;width:13px;height:13px;border-radius:3px;background:#f05a28"></div>
<div class="t" style="left:693px;top:623px;font-size:10px;line-height:12px;color:#fff;font-weight:bold">S</div>
<svg class="a" style="left:719px;top:626px" width="11" height="7" viewBox="0 0 11 7"><path d="M1 6 L5.5 1.5 L10 6" fill="none" stroke="#222" stroke-width="1.2"/></svg>
<svg class="a" style="left:738px;top:622px" width="10" height="15" viewBox="0 0 10 15"><rect x="2" y="0" width="6" height="10" rx="3" fill="#222"/><path d="M5 10 V14 M2 14 H8" stroke="#222" stroke-width="1.2"/></svg>
<svg class="a" style="left:755px;top:623px" width="16" height="12" viewBox="0 0 16 12"><rect x="1" y="3" width="14" height="8" fill="#222"/><rect x="3" y="0.5" width="9" height="3" fill="none" stroke="#222"/></svg>
<svg class="a" style="left:774px;top:622px" width="16" height="14" viewBox="0 0 16 14"><path d="M3 1 H15 V10 H9" fill="none" stroke="#222" stroke-width="1.1"/><rect x="1" y="4" width="3" height="8" fill="#222"/></svg>
<svg class="a" style="left:791px;top:624px" width="12" height="11" viewBox="0 0 12 11"><path d="M1 4 H3 L6 1 V10 L3 7 H1Z" fill="none" stroke="#222"/><path d="M8 3 Q10 5.5 8 8 M9.5 1.5 Q12.5 5.5 9.5 9.5" fill="none" stroke="#222"/></svg>
<div class="t" style="left:823px;top:619px;font-size:10px;line-height:12px;color:#222;">15:05</div>
<div class="t" style="left:813px;top:632px;font-size:10px;line-height:12px;color:#222;">2023/1/13</div>
<svg class="a" style="left:872px;top:622px" width="16" height="15" viewBox="0 0 16 15"><path d="M1 1 H15 V12 H11 L8 14 L8 12 H1Z" fill="none" stroke="#222" stroke-width="1.1"/></svg>
<div class="a" style="left:904px;top:0;width:188px;height:643px;background:linear-gradient(90deg,#505256 0%,#4a4c50 6%,#3a3c40 35%,#1c1d1f 65%,#060606 100%)"></div>
<div class="a" style="left:904px;top:0;width:9px;height:643px;background:linear-gradient(90deg,#55575b,#4b4d51)"></div>
<div class="a" style="left:912px;top:-1px;width:180px;height:94px;border-top:1.5px solid #5a5d61;border-bottom:1.5px solid #5a5d61;border-left:1.5px solid #55585c"></div>
<div class="a" style="left:912px;top:102px;width:180px;height:101px;border-top:1.5px solid #5a5d61;border-bottom:1.5px solid #5a5d61;border-left:1.5px solid #55585c"></div>
<div class="a" style="left:912px;top:211px;width:180px;height:104px;border-top:1.5px solid #5a5d61;border-bottom:1.5px solid #5a5d61;border-left:1.5px solid #55585c"></div>
<div class="a" style="left:912px;top:322px;width:180px;height:102px;border-top:1.5px solid #5a5d61;border-bottom:1.5px solid #5a5d61;border-left:1.5px solid #55585c"></div>
<div class="a" style="left:912px;top:431px;width:180px;height:103px;border-top:1.5px solid #5a5d61;border-bottom:1.5px solid #5a5d61;border-left:1.5px solid #55585c"></div>
<div class="a" style="left:912px;top:542px;width:180px;height:102px;border-top:1.5px solid #5a5d61;border-bottom:1.5px solid #5a5d61;border-left:1.5px solid #55585c"></div>
<svg class="a" style="left:914px;top:0" width="176" height="92" viewBox="0 0 176 92">
<defs>
<radialGradient id="pk" cx="0.5" cy="0.5" r="0.5"><stop offset="0" stop-color="#f7e9a0"/><stop offset=".35" stop-color="#f2c0a0"/><stop offset=".6" stop-color="#f6d8d0"/><stop offset=".8" stop-color="#f8e6e4"/><stop offset="1" stop-color="#f3f8fa" stop-opacity="0"/></radialGradient>
<linearGradient id="gd" x1="0" x2="1"><stop offset="0" stop-color="#d89a20"/><stop offset=".5" stop-color="#f4dc60"/><stop offset="1" stop-color="#c88a18"/></linearGradient>
<radialGradient id="rb2" cx="0.3" cy="0.2" r="0.7"><stop offset="0" stop-color="#e03a3a"/><stop offset=".5" stop-color="#f09090"/><stop offset="1" stop-color="#f3f8fa" stop-opacity="0"/></radialGradient><linearGradient id="rb" x1="0" y1="0" x2="1" y2="0"><stop offset="0" stop-color="#c8121a"/><stop offset=".7" stop-color="#e02a2a"/><stop offset="1" stop-color="#f6c8c8" stop-opacity="0.1"/></linearGradient>
</defs>
<rect width="176" height="92" fill="#f3f8fa"/>
<ellipse cx="150" cy="6" rx="62" ry="22" fill="url(#pk)"/>
<ellipse cx="72" cy="0" rx="34" ry="10" fill="url(#rb2)"/>
<path d="M33.8 0 L66 0 Q52 8 42 22 Q34 34 32 48 L22 48 Q22 24 33.8 0Z" fill="#d21a1e"/>
<path d="M40 0 L56 0 Q46 10 38 24 L34 30 Q34 16 40 0Z" fill="#e4322c"/>
<path d="M41 3 Q44 -1 50 1 L54 6 Q52 14 46 16 Q40 17 39 11 L44 12 Q49 10 47 5Z" fill="#f2c832"/>
<path d="M6.6 46 Q20 40 38 46 Q46 52 44 64 Q36 74 20 72 Q8 70 6.6 58Z" fill="#c8141a"/>
<path d="M10 50 Q24 46 36 52 Q40 60 34 66 Q22 68 12 62Z" fill="#e0201e"/>
<path d="M16.6 10 L28 10 L28.5 69 L17 69Z" fill="url(#gd)"/>
<path d="M21 0 L34 0 L33 8 Q28 14 22 12Z" fill="#ecc23a"/>
<path d="M17 12 Q19 8 24 10 L28 14 L28 20 Q22 18 18 16Z" fill="#f0cc48"/>
<path d="M3.7 12 Q10 10 18 16 L18 31.5 Q10 28 3.7 26Z" fill="#eac444"/>
<path d="M28 38 Q36 38 46 44 L44 56 Q36 50 28 50Z" fill="#e8c040"/>
<path d="M26 52 L28.5 48.5 L31 52 L29.5 55 L27 55Z" fill="#f6d040"/>
<path d="M19 58 L21 56 L23 58 L21 61Z" fill="#f6d040"/>
<path d="M40 92 Q70 78 110 80 Q150 82 176 70 L176 92Z" fill="#d01c20"/>
<path d="M60 92 Q100 84 140 86 Q160 86 176 80 L176 92Z" fill="#a80e14"/>
<path d="M30 92 Q50 86 70 84 Q60 88 50 92Z" fill="#e85050"/>
<g fill="#c8141a"><path d="M126 14 L131 10 L134 14 L130 19Z"/><path d="M138 17 L144 13 L146 18Z"/><path d="M156 18 L162 15 L165 20Z"/><path d="M124 23 L127 22 L127 25Z"/><path d="M146 25 L150 23 L149 27Z"/><path d="M162 26 L165 25 L165 28Z"/></g>
<text x="103" y="47" text-anchor="middle" font-family="Liberation Sans" font-weight="bold" font-size="14" fill="#b81a1e">支部书记述职</text>
<text x="103" y="63" text-anchor="middle" font-family="Liberation Sans" font-weight="bold" font-size="7" fill="#b81a1e">外国语学院</text>
<text x="103" y="72" text-anchor="middle" font-family="Liberation Sans" font-size="7" fill="#b81a1e">2023.1.13</text>
</svg>
<div class="a" style="left:915px;top:71px;width:82px;height:21px;background:rgba(40,40,42,.82)"></div>
<div class="a" style="left:915px;top:71px;width:20px;height:21px;background:#f68220"></div>
<svg class="a" style="left:915px;top:71px" width="20" height="21"><circle cx="10" cy="7.5" r="3.6" fill="#fff"/><path d="M3.5 17.5 Q3.5 12 10 12 Q16.5 12 16.5 17.5Z" fill="#fff"/></svg>
<svg class="a" style="left:940px;top:74px" width="16" height="16" viewBox="0 0 16 16"><rect x="5" y="1" width="6" height="9" rx="3" fill="#fff"/><path d="M3 7.5 Q3 12.5 8 12.5 Q13 12.5 13 7.5" stroke="#fff" stroke-width="1.6" fill="none"/><rect x="7.2" y="12" width="1.6" height="3" fill="#fff"/><rect x="5" y="14.2" width="6" height="1.5" fill="#fff"/><path d="M13 2.5 L2.5 14" stroke="#e03a3a" stroke-width="1.5"/></svg><div class="t" style="left:959px;top:76px;font-size:11px;line-height:13px;color:#fff">张建英</div>
<div class="a" style="left:914px;top:104px;width:178px;height:98px;background:#2b2e32"></div>
<svg class="a" style="left:975px;top:104px" width="55" height="98" viewBox="0 0 55 98"><filter id="vb2" x="0" y="0" width="1" height="1"><feGaussianBlur stdDeviation="0.6"/></filter><g filter="url(#vb2)">
<defs><linearGradient id="ceil" x1="0" y1="0" x2="0" y2="1"><stop offset="0" stop-color="#e4e6e4"/><stop offset="1" stop-color="#c8c8c4"/></linearGradient></defs>
<rect width="55" height="98" fill="#5a4438"/>
<path d="M0 0 L55 0 L55 3 L30 8 L0 18Z" fill="url(#ceil)"/>
<path d="M0 18 L30 8 L30 14 L0 24Z" fill="#7a5038"/>
<rect x="0" y="22" width="12" height="55" fill="#4a3c34"/>
<rect x="12" y="14" width="4" height="84" fill="#8c5a3c"/>
<rect x="16" y="14" width="10" height="70" fill="#3e3834"/>
<rect x="17" y="38" width="8" height="7" fill="#b0a098"/><rect x="17" y="58" width="8" height="6" fill="#a89890"/>
<rect x="26" y="8" width="6" height="90" fill="#8e5a3a"/>
<rect x="32" y="8" width="13" height="82" fill="#4c4642"/>
<rect x="33" y="14" width="10" height="7" fill="#d8d4d0"/><rect x="33" y="30" width="11" height="9" fill="#c8c0b8"/><rect x="33" y="46" width="11" height="9" fill="#c0b4ac"/><rect x="33" y="62" width="11" height="9" fill="#b8aca4"/>
<rect x="45" y="2" width="10" height="96" fill="#8a5838"/>
<rect x="45" y="5" width="9" height="12" fill="#d8d8d8"/>
<rect x="36" y="0" width="2" height="98" fill="#6a4632" opacity=".5"/>
<rect x="44" y="36" width="2" height="12" fill="#e0e0e0"/><rect x="47" y="36" width="2" height="12" fill="#e0e0e0"/>
<path d="M20 64 Q28 66 32 80 L32 98 L0 98 L0 70Z" fill="#2c2628"/>
<path d="M0 52 Q8 44 18 48 Q26 54 25 70 Q22 84 14 88 Q6 90 0 86Z" fill="#c9957a"/>
<path d="M0 50 Q10 42 20 47 L22 56 Q14 50 4 56 L0 58Z" fill="#3a2a24"/>
<path d="M23 62 Q27 62 26 70 Q24 73 22 70Z" fill="#b88068"/>
<path d="M0 84 Q8 90 18 84 Q32 82 40 98 L0 98Z" fill="#7184a0"/>
</g></svg>
<div class="a" style="left:914px;top:180px;width:61px;height:22px;background:rgba(10,10,12,.85)"></div><svg class="a" style="left:918px;top:183px" width="16" height="16" viewBox="0 0 16 16"><rect x="5" y="1" width="6" height="9" rx="3" fill="#fff"/><path d="M3 7.5 Q3 12.5 8 12.5 Q13 12.5 13 7.5" stroke="#fff" stroke-width="1.6" fill="none"/><rect x="7.2" y="12" width="1.6" height="3" fill="#fff"/><rect x="5" y="14.2" width="6" height="1.5" fill="#fff"/><path d="M13 2.5 L2.5 14" stroke="#e03a3a" stroke-width="1.5"/></svg><div class="t" style="left:938px;top:185px;font-size:11px;line-height:13px;color:#fff">刘恩峰</div>
<div class="a" style="left:912px;top:212px;width:180px;height:102px;border:2px solid #1ec85a;border-right:none;border-radius:4px 0 0 4px"></div>
<svg class="a" style="left:914px;top:214px" width="178" height="98" viewBox="0 0 178 98"><defs><filter id="vb3" x="0" y="0" width="1" height="1"><feGaussianBlur stdDeviation="0.7"/></filter></defs><g filter="url(#vb3)">
<rect width="178" height="98" fill="#7e6650"/>
<path d="M0 0 H24 V60 H0Z" fill="#5c7282"/>
<path d="M2 2 L24 14 V58 L2 56Z" fill="#4e6272"/>
<rect x="24" y="0" width="6" height="98" fill="#a8b4ba"/>
<rect x="30" y="0" width="84" height="98" fill="#87694f"/>
<rect x="30" y="0" width="84" height="4" fill="#6e5644"/>
<rect x="56" y="0" width="1.2" height="98" fill="#6c5242"/><rect x="78" y="0" width="1.2" height="98" fill="#6c5242"/><rect x="100" y="0" width="1.2" height="98" fill="#6c5242"/>
<rect x="114" y="0" width="64" height="98" fill="#6e5a4a"/>
<rect x="114" y="4" width="64" height="10" fill="#5c4a3e"/>
<rect x="138" y="18" width="30" height="80" fill="#8aa0ae"/>
<rect x="138" y="18" width="30" height="10" fill="#c6d2da"/>
<rect x="138" y="28" width="6" height="50" fill="#dce6ec"/>
<rect x="146" y="30" width="10" height="50" fill="#9cb0bc"/>
<rect x="150" y="44" width="12" height="36" fill="#6e8494"/>
<rect x="138" y="78" width="30" height="20" fill="#a8bcc8"/>
<rect x="168" y="0" width="10" height="98" fill="#2e2824"/>
<rect x="0" y="56" width="54" height="42" fill="#3c4650"/>
<rect x="16" y="50" width="10" height="16" fill="#d4d8dc"/><rect x="28" y="48" width="8" height="18" fill="#b8c0c8"/>
<path d="M0 64 L58 78 L58 82 L0 69Z" fill="#1e2226"/>
<path d="M54 98 Q60 78 86 72 L134 70 Q158 78 168 98Z" fill="#17171c"/>
<path d="M66 36 Q62 12 88 8 Q118 4 124 30 L124 50 Q110 36 84 40 L74 52Z" fill="#121212"/>
<path d="M74 46 Q74 28 96 26 Q118 24 122 44 Q126 66 116 80 Q106 90 94 88 Q80 82 76 64Z" fill="#ece6e6"/>
<path d="M70 40 Q68 54 76 60 L78 48Z" fill="#d8cccc"/>
<circle cx="103" cy="52" r="6.5" fill="none" stroke="#3a3434" stroke-width="1.4"/><circle cx="121" cy="52" r="6.5" fill="none" stroke="#3a3434" stroke-width="1.4"/>
<path d="M92 62 Q100 66 108 62" fill="none" stroke="#c8b8b8"/>
<path d="M84 78 L98 96 L70 98 L74 82Z" fill="#e89a58"/><path d="M90 88 Q102 82 118 88 L120 98 L86 98Z" fill="#e6cf8c"/>
</g></svg>
<div class="a" style="left:914px;top:290px;width:61px;height:22px;background:rgba(10,10,12,.75)"></div><svg class="a" style="left:918px;top:293px" width="16" height="16" viewBox="0 0 16 16"><rect x="5" y="1" width="6" height="9" rx="3" fill="#fff"/><path d="M3 7.5 Q3 12.5 8 12.5 Q13 12.5 13 7.5" stroke="#fff" stroke-width="1.6" fill="none"/><rect x="7.2" y="12" width="1.6" height="3" fill="#fff"/><rect x="5" y="14.2" width="6" height="1.5" fill="#fff"/></svg><div class="t" style="left:938px;top:295px;font-size:11px;line-height:13px;color:#fff">庄三生</div>
<div class="a" style="left:914px;top:324px;width:178px;height:99px;background:#232426"></div>
<div class="a" style="left:914px;top:433px;width:178px;height:99px;background:#232426"></div>
<div class="a" style="left:914px;top:544px;width:178px;height:99px;background:#232426"></div>
<svg class="a" style="left:978px;top:341px" width="50" height="50" viewBox="0 0 50 50">
<defs><clipPath id="cc"><circle cx="25" cy="25" r="24.8"/></clipPath>
<linearGradient id="sky" x1="0" y1="0" x2="0" y2="1"><stop offset="0" stop-color="#c99a66"/><stop offset=".6" stop-color="#e6b678"/><stop offset="1" stop-color="#f2c888"/></linearGradient>
<linearGradient id="fld" x1="0" y1="0" x2="0" y2="1"><stop offset="0" stop-color="#c07838"/><stop offset=".4" stop-color="#a85e24"/><stop offset="1" stop-color="#84441a"/></linearGradient>
<radialGradient id="sun" cx=".5" cy=".5" r=".5"><stop offset="0" stop-color="#fffbe0"/><stop offset=".5" stop-color="#f8e0a0" stop-opacity=".8"/><stop offset="1" stop-color="#f0c888" stop-opacity="0"/></radialGradient>
<filter id="fb1"><feGaussianBlur stdDeviation="0.5"/></filter></defs>
<g clip-path="url(#cc)"><rect width="50" height="16" fill="url(#sky)"/><ellipse cx="30" cy="7" rx="12" ry="2" fill="#a07050" opacity=".5"/><circle cx="10" cy="11" r="6" fill="url(#sun)"/>
<rect y="14.5" width="50" height="1.8" fill="#2e1e10"/><rect y="16.3" width="50" height="34" fill="url(#fld)"/>
<g filter="url(#fb1)" opacity=".4"><path d="M4 22 L6 30 M10 20 L12 34 M18 24 L16 40 M26 22 L28 38 M34 26 L32 44 M40 22 L42 36 M46 28 L44 42 M8 38 L10 48 M22 40 L20 50 M36 40 L38 50" stroke="#e0a050" stroke-width="1.2"/><path d="M6 26 L8 40 M14 28 L14 46 M30 30 L30 48 M44 30 L46 46" stroke="#703a14" stroke-width="1"/></g>
</g></svg>
<svg class="a" style="left:978px;top:451px" width="50" height="50" viewBox="0 0 50 50">
<defs><clipPath id="cc2"><circle cx="25" cy="25" r="24.8"/></clipPath><filter id="bl2"><feGaussianBlur stdDeviation="0.9"/></filter>
<linearGradient id="fbg" x1="0" y1="0" x2="1" y2="0.3"><stop offset="0" stop-color="#e6e0e2"/><stop offset=".6" stop-color="#d4d2d2"/><stop offset="1" stop-color="#c4c8c4"/></linearGradient></defs>
<g clip-path="url(#cc2)"><rect width="50" height="50" fill="url(#fbg)"/>
<g filter="url(#bl2)">
<path d="M-2 40 Q10 34 22 34 Q34 36 44 30 L52 28 L52 52 L-2 52Z" fill="#9cc454"/>
<path d="M18 44 Q28 38 40 42 L44 52 L16 52Z" fill="#7aa838"/>
<path d="M40 26 Q46 20 50 22 L50 34 Q44 34 40 30Z" fill="#b8d468"/>
<ellipse cx="27" cy="18" rx="5.5" ry="6.5" fill="#e6a4bc"/>
<ellipse cx="40" cy="18" rx="4.5" ry="5.5" fill="#e4a2ba"/>
<ellipse cx="19" cy="26" rx="5.5" ry="5" fill="#e8aac0"/>
<ellipse cx="8" cy="29.5" rx="5" ry="4" fill="#dc98b0"/>
<ellipse cx="40" cy="28" rx="5" ry="5.5" fill="#e0a0b8"/>
<ellipse cx="14" cy="43" rx="4" ry="4" fill="#d8a0b8"/>
</g></g></svg>
<svg class="a" style="left:978px;top:561px" width="50" height="50" viewBox="0 0 50 50">
<defs><clipPath id="cc3"><circle cx="25" cy="25" r="24.8"/></clipPath><filter id="bl3"><feGaussianBlur stdDeviation="1"/></filter></defs>
<g clip-path="url(#cc3)"><rect width="50" height="50" fill="#3e7424"/>
<g filter="url(#bl3)">
<ellipse cx="22" cy="8" rx="16" ry="7" fill="#78b040"/><ellipse cx="10" cy="16" rx="8" ry="6" fill="#8cc450"/>
<ellipse cx="24" cy="16" rx="9" ry="6" fill="#6aa838"/><ellipse cx="38" cy="18" rx="8" ry="6" fill="#80bc48"/>
<ellipse cx="14" cy="34" rx="12" ry="8" fill="#7cb846"/><ellipse cx="30" cy="32" rx="9" ry="7" fill="#5a9830"/>
<ellipse cx="42" cy="28" rx="8" ry="7" fill="#78b444"/><ellipse cx="40" cy="44" rx="10" ry="6" fill="#6cac3c"/>
<ellipse cx="20" cy="46" rx="8" ry="5" fill="#3a6a20"/><ellipse cx="6" cy="24" rx="5" ry="6" fill="#2e5a1a"/>
</g>
<path d="M29.5 23 V38" stroke="#3a5a20" stroke-width="0.8"/>
<circle cx="31.5" cy="21" r="2.8" fill="#d83060"/></g></svg>
<div class="a" style="left:914px;top:400px;width:50px;height:22px;background:rgba(10,10,12,.85)"></div><svg class="a" style="left:918px;top:403px" width="16" height="16" viewBox="0 0 16 16"><rect x="5" y="1" width="6" height="9" rx="3" fill="#fff"/><path d="M3 7.5 Q3 12.5 8 12.5 Q13 12.5 13 7.5" stroke="#fff" stroke-width="1.6" fill="none"/><rect x="7.2" y="12" width="1.6" height="3" fill="#fff"/><rect x="5" y="14.2" width="6" height="1.5" fill="#fff"/><path d="M13 2.5 L2.5 14" stroke="#e03a3a" stroke-width="1.5"/></svg><div class="t" style="left:938px;top:405px;font-size:11px;line-height:13px;color:#fff">张强</div>
<div class="a" style="left:914px;top:510px;width:60px;height:22px;background:rgba(10,10,12,.85)"></div><svg class="a" style="left:918px;top:513px" width="16" height="16" viewBox="0 0 16 16"><rect x="5" y="1" width="6" height="9" rx="3" fill="#fff"/><path d="M3 7.5 Q3 12.5 8 12.5 Q13 12.5 13 7.5" stroke="#fff" stroke-width="1.6" fill="none"/><rect x="7.2" y="12" width="1.6" height="3" fill="#fff"/><rect x="5" y="14.2" width="6" height="1.5" fill="#fff"/><path d="M13 2.5 L2.5 14" stroke="#e03a3a" stroke-width="1.5"/></svg><div class="t" style="left:938px;top:515px;font-size:11px;line-height:13px;color:#fff">张锦辉</div>
<div class="a" style="left:914px;top:620px;width:60px;height:22px;background:rgba(10,10,12,.85)"></div><svg class="a" style="left:918px;top:623px" width="16" height="16" viewBox="0 0 16 16"><rect x="5" y="1" width="6" height="9" rx="3" fill="#fff"/><path d="M3 7.5 Q3 12.5 8 12.5 Q13 12.5 13 7.5" stroke="#fff" stroke-width="1.6" fill="none"/><rect x="7.2" y="12" width="1.6" height="3" fill="#fff"/><rect x="5" y="14.2" width="6" height="1.5" fill="#fff"/><path d="M13 2.5 L2.5 14" stroke="#e03a3a" stroke-width="1.5"/></svg><div class="t" style="left:938px;top:625px;font-size:11px;line-height:13px;color:#fff">杨康平</div>
</body></html>
